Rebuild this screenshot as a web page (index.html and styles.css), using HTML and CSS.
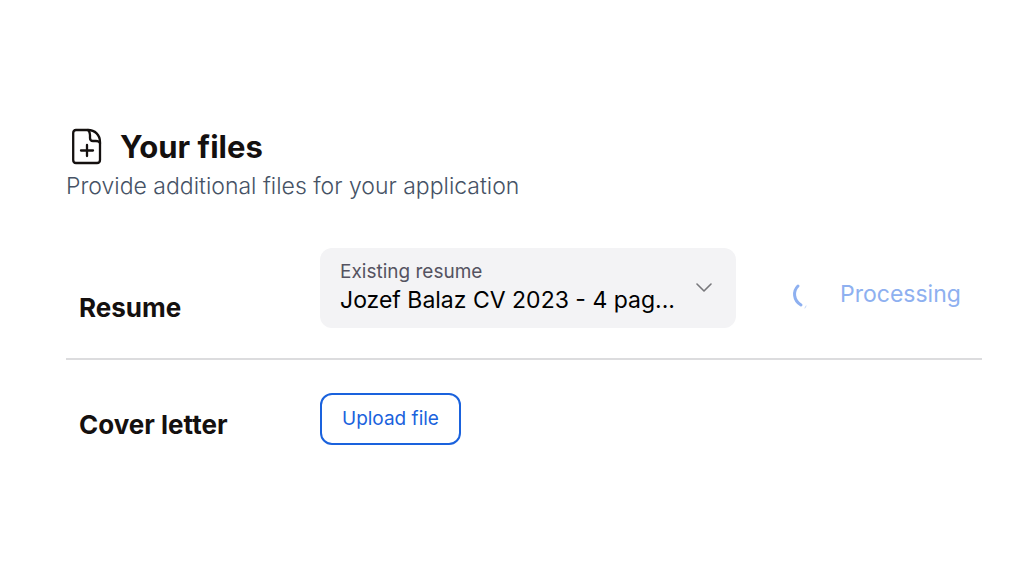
FILE: index.html
```
<!DOCTYPE html>
<html lang="en">
<head>
    <meta charset="UTF-8">
    <meta name="viewport" content="width=device-width, initial-scale=1">
    <title>Your files</title>
    <link rel="stylesheet" href="styles.css">
</head>
<body>

    <main class="files">
        <header class="files-header">
            <div class="title">
                <svg class="title-icon" width="30" height="38" viewBox="0 0 30 38" fill="none" stroke="currentColor" stroke-width="2.3" stroke-linecap="round" stroke-linejoin="round" aria-hidden="true">
                    <path d="M4 2H16C23 2 28 7 28 14V32Q28 35 25 35H4Q1.2 35 1.2 32V5Q1.2 2 4 2Z"/>
                    <path d="M16 2Q18 4 18 7V10Q18 13 21 13H24Q27 13 28 15"/>
                    <path d="M15 17V28M9 22.500H21"/>
                </svg>
                <h1>Your files</h1>
            </div>
            <p class="subtitle">Provide additional files for your application</p>
        </header>

        <section class="row">
            <h2 class="row-label">Resume</h2>
            <div class="select-box">
                <label for="resume">Existing resume</label>
                <select id="resume">
                    <option>Jozef Balaz CV 2023 - 4 pag...</option>
                </select>
                <svg class="chevron" width="18" height="10" viewBox="0 0 18 10" fill="none" stroke="currentColor" stroke-width="1.6" stroke-linecap="round" stroke-linejoin="round" aria-hidden="true">
                    <path d="M2 1L9 8L16 1"/>
                </svg>
            </div>
            <div class="status" role="status">
                <svg class="spinner" width="16" height="30" viewBox="0 0 16 30" fill="none" stroke="currentColor" stroke-linecap="round" aria-hidden="true">
                    <path stroke-width="3" d="M6 7C1 12 1 21 9 26"/>
                    <path stroke-width="1" opacity=".5" d="M13 29L14 27"/>
                </svg>
                <span>Processing</span>
            </div>
        </section>

        <section class="row">
            <h2 class="row-label">Cover letter</h2>
            <button type="button" class="upload-btn">Upload file</button>
        </section>
    </main>

</body>
</html>
```
FILE: styles.css
```
body {
    margin: 0;
    background: #fff;
    color: #14100f;
    font-family: Inter, sans-serif;
}
.files {
    padding: 127px 42px 64px 66px;
}
.files-header {
    margin-bottom: 46px;
}
.title {
    display: flex;
    align-items: center;
    gap: 18px;
    padding-left: 6px;
}
.title-icon {
    flex: none;
}
h1 {
    margin: 0;
    font-size: 31px;
    line-height: 40px;
    font-weight: 700;
}
.subtitle {
    margin: 0;
    padding-top: 3px;
    font-size: 23px;
    line-height: 32px;
    font-weight: 300;
    color: #465265;
}
.row {
    display: grid;
    grid-template-columns: 241px minmax(0, 416px) 1fr;
    align-items: end;
    padding-left: 13px;
    padding-bottom: 30px;
}
.row + .row {
    border-top: 2px solid #dcdcde;
    padding-top: 33px;
}
.row-label {
    margin: 0;
    padding-bottom: 4px;
    font-size: 26px;
    line-height: 32px;
    font-weight: 700;
}
.select-box {
    position: relative;
    box-sizing: border-box;
    padding: 11px 56px 13px 20px;
    background: #f3f3f5;
    border-radius: 12px;
}
.select-box label {
    display: block;
    font-size: 19px;
    line-height: 26px;
    color: #555361;
}
.select-box select {
    display: block;
    appearance: none;
    width: 100%;
    padding: 0;
    border: 0;
    background: transparent;
    color: #000;
    font-family: inherit;
    font-size: 23px;
    line-height: 30px;
    text-overflow: ellipsis;
}
.chevron {
    position: absolute;
    top: 35px;
    right: 23px;
    color: #77777b;
    pointer-events: none;
}
.status {
    display: flex;
    align-items: center;
    align-self: center;
    gap: 32px;
    padding-left: 56px;
    padding-top: 12px;
    font-size: 23px;
    line-height: 32px;
    color: #8eb0f0;
}
.spinner {
    flex: none;
}
.upload-btn {
    justify-self: start;
    padding: 12px 20px;
    border: 2px solid #1a62dd;
    border-radius: 12px;
    background: #fff;
    color: #1a62dd;
    font-family: inherit;
    font-size: 19px;
    line-height: 24px;
    cursor: pointer;
}
```
